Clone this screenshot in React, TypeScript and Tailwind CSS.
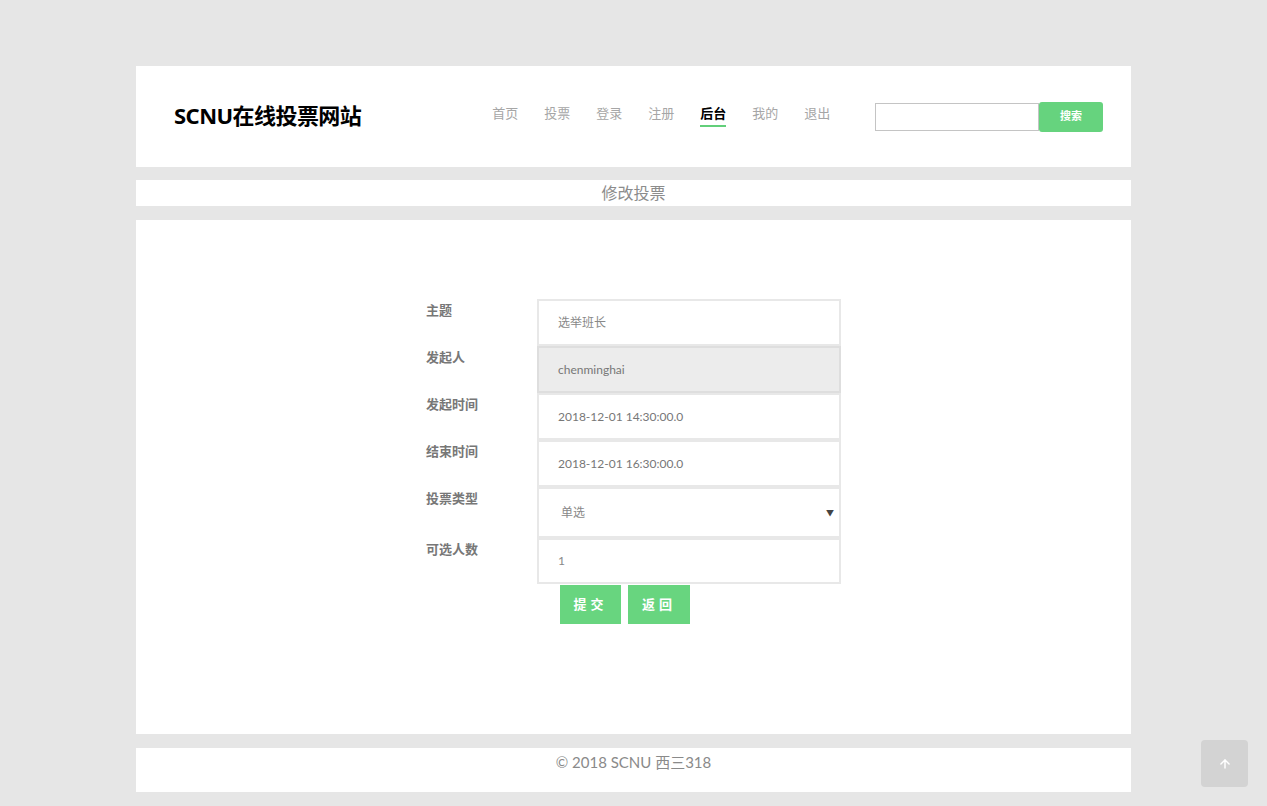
import { ArrowUp } from "lucide-react";

const font = {
  fontFamily: '"Lato", "Noto Sans CJK SC", sans-serif',
};

const navItems = ["首页", "投票", "登录", "注册", "后台", "我的", "退出"];

export default function App() {
  return (
    <div className="min-h-[806px] bg-[#e6e6e6] pt-[66px]" style={font}>
      <div className="mx-auto w-[995px] ml-[136px]">
        {/* Header */}
        <header className="flex h-[101px] items-center bg-white pl-[38px] pr-[28px]">
          <h1 className="text-[22px] font-bold text-black tracking-tight pb-[2px]" style={{ fontFamily: '"Noto Sans", "Noto Sans CJK SC", sans-serif' }}>
            SCNU在线投票网站
          </h1>
          <nav className="ml-[131px] flex gap-[26px] pt-[2px] pb-[4px]">
            {navItems.map((n) => (
              <a
                key={n}
                className={
                  n === "后台"
                    ? "border-b-2 border-[#62cf7a] pb-[1px] text-[13px] font-bold text-black"
                    : "pb-[3px] text-[13px] text-[#a6a6a6]"
                }
              >
                {n}
              </a>
            ))}
          </nav>
          <div className="ml-auto flex items-center">
            <input className="h-[28px] w-[164px] border border-[#c4c4c4] bg-white outline-none" />
            <button className="h-[30px] w-[64px] rounded-[3px] bg-[#66d37e] text-[11px] font-bold text-white">
              搜索
            </button>
          </div>
        </header>

        {/* Title */}
        <div className="mt-[13px] flex h-[26px] items-center justify-center bg-white text-[16px] text-[#8c8c8c]">
          修改投票
        </div>

        {/* Form panel */}
        <main className="mt-[14px] h-[514px] bg-white pt-[79px]">
          <div className="ml-[290px] w-[415px]">
            <FormRow label="主题" h="h-[47px]">
              <div className="flex h-[47px] items-center border-2 border-[#e8e8e8] bg-white pl-[19px] text-[12px] text-[#888]">
                选举班长
              </div>
            </FormRow>
            <FormRow label="发起人" h="h-[47px]">
              <div className="flex h-[47px] items-center border-2 border-[#dedede] bg-[#ececec] pl-[19px] text-[12px] text-[#777]">
                chenminghai
              </div>
            </FormRow>
            <FormRow label="发起时间" h="h-[47px]">
              <div className="flex h-[47px] items-center border-2 border-[#e8e8e8] bg-white pl-[19px] text-[12px] text-[#777]">
                2018-12-01 14:30:00.0
              </div>
            </FormRow>
            <FormRow label="结束时间" h="h-[47px]">
              <div className="flex h-[47px] items-center border-2 border-[#e8e8e8] bg-white pl-[19px] text-[12px] text-[#777]">
                2018-12-01 16:30:00.0
              </div>
            </FormRow>
            <FormRow label="投票类型" h="h-[51px]">
              <div className="flex h-[51px] items-center justify-between border-2 border-[#e8e8e8] bg-white pl-[22px] pr-[5px] text-[12px] text-[#888]">
                <span>单选</span>
                <span className="text-[8px] text-[#444]">▼</span>
              </div>
            </FormRow>
            <FormRow label="可选人数" h="h-[46px]">
              <div className="flex h-[46px] items-center border-2 border-[#e8e8e8] bg-white pl-[19px] text-[12px] text-[#888]">
                1
              </div>
            </FormRow>
            <div className="ml-[134px] mt-[1px] flex gap-[7px]">
              <button className="h-[39px] w-[61px] bg-[#68d57f] text-[13px] font-bold tracking-[4px] text-white">
                提交
              </button>
              <button className="h-[39px] w-[62px] bg-[#68d57f] text-[13px] font-bold tracking-[4px] text-white">
                返回
              </button>
            </div>
          </div>
        </main>

        {/* Footer */}
        <footer className="mt-[14px] h-[44px] pt-[3px] bg-white text-center text-[15px] text-[#8a8a8a]">
          © 2018 SCNU 西三318
        </footer>
      </div>

      <button className="fixed left-[1201px] top-[740px] flex h-[47px] w-[47px] items-center justify-center rounded-[4px] bg-[#d3d3d3] text-white">
        <ArrowUp size={14} strokeWidth={2.5} />
      </button>
    </div>
  );
}

function FormRow({ label, h, children }: { label: string; h: string; children: React.ReactNode }) {
  return (
    <div className={`flex ${h}`}>
      <div className="w-[111px] pt-[2px] text-[13px] font-bold text-[#777]">{label}</div>
      <div className="w-[304px]">{children}</div>
    </div>
  );
}
